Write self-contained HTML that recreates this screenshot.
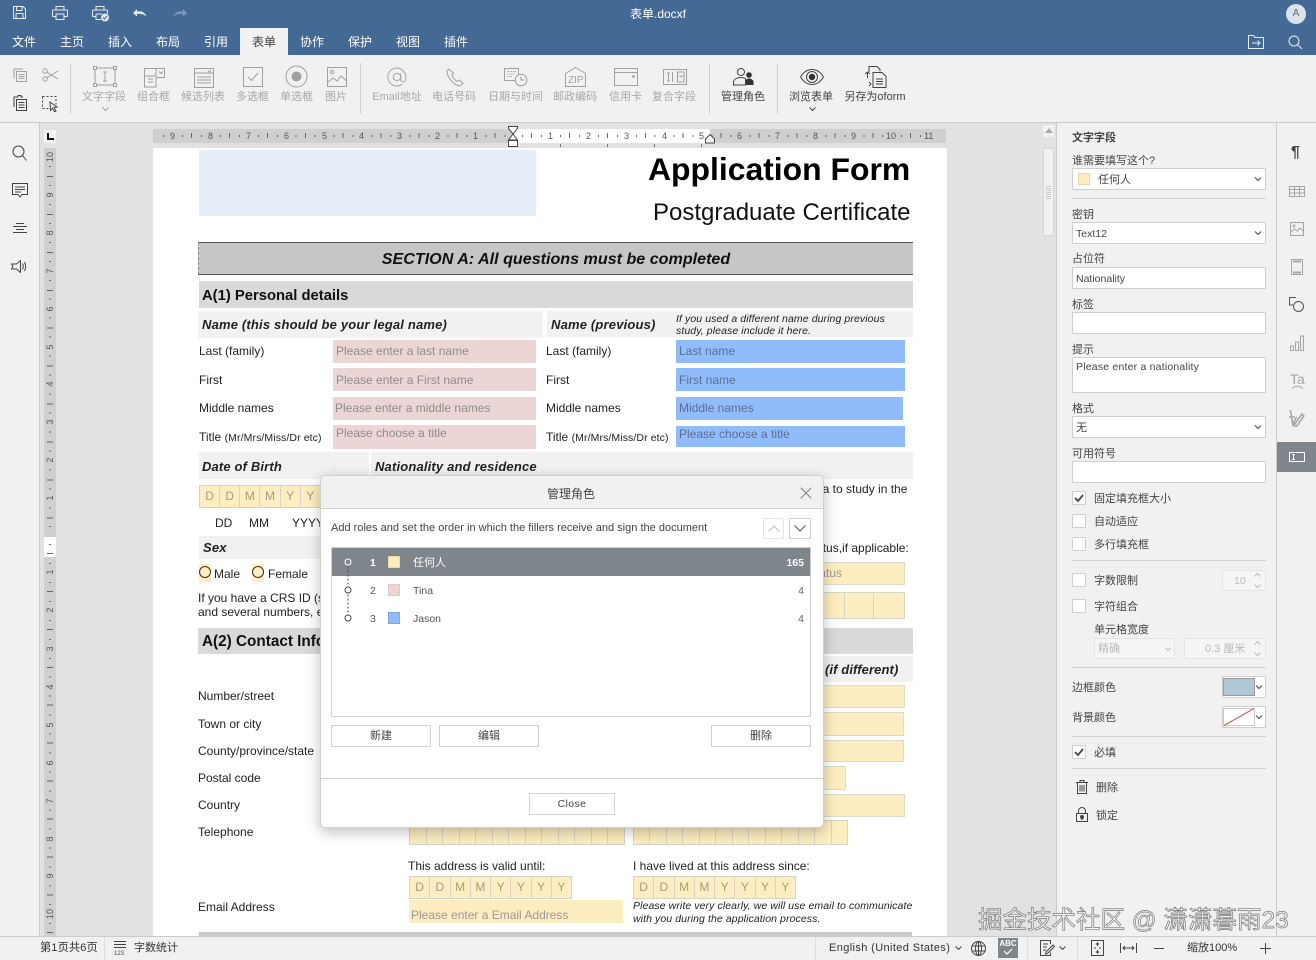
<!DOCTYPE html>
<html lang="zh"><head><meta charset="utf-8"><title>表单.docxf</title>
<style>
*{box-sizing:border-box}
html,body{margin:0;padding:0;width:1316px;height:960px;overflow:hidden;background:#e2e2e2}
body{position:relative;font-family:"Liberation Sans","Noto Sans CJK SC",sans-serif;font-size:11px;color:#444}
div,span,svg{position:absolute}
.t{white-space:nowrap;line-height:14px;height:14px}
.c span,.m span{position:static}
.m{color:#fff;font-size:12px;top:35px}
.lb{color:#a8a8a8;font-size:11px;top:90px;text-align:center}
.dk{color:#444}
.ic{fill:none;stroke:#a0a0a0;stroke-width:1}
.id{fill:none;stroke:#444;stroke-width:1}
.vd{background:#cfcfcf;width:1px}
.l{color:#222;font-size:12px}
.pk{background:#ecd5d5;color:#8d8d8d;font-size:12px;padding-left:3px;line-height:23px;white-space:nowrap}
.bl{background:#90bcfb;color:#5b6f94;font-size:12px;padding-left:3px;line-height:23px;white-space:nowrap}
.yl{background:#fdedc0;border:1px solid #d9dcc8;color:#999;font-size:12px;padding-left:2px;line-height:26px;white-space:nowrap}
.g1{background:#d9d9d9}.g2{background:#f1f1f1}
.h2{font-weight:bold;font-size:14.800px;color:#111}
.h3{font-weight:bold;font-style:italic;font-size:13px;letter-spacing:.18px;color:#222}
.it{font-style:italic;font-size:10.500px;color:#222;letter-spacing:.09px}
.comb{display:flex;background:#fdedc0;border:1px solid #d3d6c4;height:23px}
.comb b{position:static;display:block;flex:1;font-weight:normal;text-align:center;color:#a59b80;font-size:12px;line-height:21px;border-right:1px solid #d3d6c4}
.comb b:last-child{border-right:0}
.rn{color:#555;font-size:9px;line-height:10px;white-space:nowrap}
.pl{color:#444;font-size:11px}
.inp{background:#fff;border:1px solid #cfcfcf;border-radius:1px;color:#444;font-size:10.500px;line-height:22px;padding-left:3px;left:1072px;width:194px;white-space:nowrap}
.chk{left:1072px;width:14px;height:14px;background:#fff;border:1px solid #cfcfcf;border-radius:1px}
.hr{left:1072px;width:194px;height:1px;background:#d2d2d2}
.btn{background:#fff;border:1px solid #cfcfcf;border-radius:1px;text-align:center;color:#444;font-size:11px;line-height:21px}
.rv{left:44px;width:12px;text-align:center;transform:rotate(-90deg)}
</style></head><body>

<!-- header -->
<div style="left:0;top:0;width:1316px;height:55px;background:#446995"></div>
<svg style="left:12px;top:5px" width="15" height="15" viewBox="0 0 15 15" fill="none" stroke="#e8edf3"><path d="M1.500 1.500h9.500l2.500 2.500v9.500h-12z"/><path d="M4.500 1.500v4h5.500v-4M4 13.500v-5h7v5"/></svg>
<svg style="left:52px;top:6px" width="16" height="14" viewBox="0 0 16 14" fill="none" stroke="#e8edf3"><path d="M4 4V.5h8V4M4 10.500H1.500a1 1 0 0 1-1-1V5a1 1 0 0 1 1-1h13a1 1 0 0 1 1 1v4.500a1 1 0 0 1-1 1H12"/><path d="M4 8h8v5.500H4z"/></svg>
<svg style="left:92px;top:6px" width="18" height="16" viewBox="0 0 18 16" fill="none" stroke="#e8edf3"><path d="M4 4V.5h8V4M4 10.500H1.500a1 1 0 0 1-1-1V5a1 1 0 0 1 1-1h13a1 1 0 0 1 1 1v3"/><path d="M4 8h6M4 8v5.500h5"/><circle cx="13" cy="11.500" r="4" fill="#dfe6ef" stroke="none"/><path d="M11 11.500l1.500 1.500 2.500-3" stroke="#446995"/></svg>
<svg style="left:132px;top:8px" width="16" height="10" viewBox="0 0 16 10"><path d="M1 5l4-4v2.500c4-.8 8 .5 9.500 5-2.500-2.500-5.500-3-9.500-2.500V8.500z" fill="#e4eaf2"/></svg>
<svg style="left:172px;top:8px" width="16" height="10" viewBox="0 0 16 10"><path d="M15 5l-4-4v2.500C7 2.700 3 4 1.500 8.500 4 6 7 5.500 11 6V8.500z" fill="#7d99bb"/></svg>
<div class="t" style="left:630px;top:7px;color:#fff;font-size:12px">表单.docxf</div>
<div style="left:1286px;top:4px;width:20px;height:20px;border-radius:50%;background:#dde3ec;color:#666;font-size:10px;line-height:20px;text-align:center">A</div>
<svg style="left:1247px;top:35px" width="18" height="14" viewBox="0 0 18 14" fill="none" stroke="#e6ecf3"><path d="M1.500.5h5l1.500 2h8.500v11h-15z"/><path d="M5 8h8M10.500 5.500L13 8l-2.500 2.500"/></svg>
<svg style="left:1288px;top:35px" width="15" height="14" viewBox="0 0 15 14" fill="none" stroke="#e6ecf3"><circle cx="6" cy="6" r="5"/><path d="M9.500 9.500l4.500 4.500"/></svg>
<div style="left:240px;top:28px;width:48px;height:27px;background:#f1f1f1"></div>
<div class="t m" style="left:12px">文件</div><div class="t m" style="left:60px">主页</div><div class="t m" style="left:108px">插入</div><div class="t m" style="left:156px">布局</div><div class="t m" style="left:204px">引用</div><div class="t m" style="left:252px;color:#444">表单</div><div class="t m" style="left:300px">协作</div><div class="t m" style="left:348px">保护</div><div class="t m" style="left:396px">视图</div><div class="t m" style="left:444px">插件</div>

<!-- toolbar -->
<div style="left:0;top:55px;width:1316px;height:68px;background:#f1f1f1;border-bottom:1px solid #cbcbcb"></div>
<svg style="left:13px;top:68px" width="15" height="15" viewBox="0 0 15 15" class="ic"><path d="M1 10.500V1h9"/><path d="M3.500 3.500h10v10h-10zM5.500 6.500h6M5.500 8.500h6M5.500 10.500h6" fill="#f1f1f1"/></svg>
<svg style="left:42px;top:68px" width="17" height="14" viewBox="0 0 17 14" class="ic"><circle cx="3" cy="3" r="2.200"/><circle cx="3" cy="11" r="2.200"/><path d="M5 4.300L16 11M5 9.700L16 3"/></svg>
<svg style="left:13px;top:95px" width="15" height="16" viewBox="0 0 15 16" class="id"><path d="M1 12V2h4V.5h3V2h2"/><path d="M3.500 4.500h10v11h-10zM5.500 7.500h6M5.500 10h6M5.500 12.500h6" fill="#f1f1f1"/></svg>
<svg style="left:42px;top:96px" width="17" height="16" viewBox="0 0 17 16" class="id"><path d="M.5.500h13.500v8M.5.500v12h6" stroke-dasharray="2 2"/><path d="M8 6l7 5-3 .5 2 3.500-1.500.8-2-3.500-2 2z" fill="#f1f1f1"/></svg>
<div class="vd" style="left:70px;top:63px;height:51px"></div>
<svg style="left:93px;top:66px" width="24" height="21" viewBox="0 0 24 21" class="ic"><path d="M2 2h20v17H2z"/><path d="M.5.500h3v3h-3zM20.500.500h3v3h-3zM.5 17.500h3v3h-3zM20.500 17.500h3v3h-3z" fill="#f1f1f1"/><path d="M10 6h4M10 15h4M12 6v9"/></svg>
<div class="t lb" style="left:82px;width:44px">文字字段</div>
<svg style="left:102px;top:107px" width="7" height="5" viewBox="0 0 7 5" class="ic"><path d="M.5.500l3 3 3-3"/></svg>
<svg style="left:144px;top:68px" width="21" height="20" viewBox="0 0 21 20" class="ic"><path d="M.5.500h20v9h-8.500v9.500H.5zM.5 8h11.500V.5M4 11h5M4 14h5M15 3.500l2 2 2-2"/></svg>
<div class="t lb" style="left:137px;width:33px">组合框</div>
<svg style="left:194px;top:68px" width="20" height="20" viewBox="0 0 20 20" class="ic"><path d="M.5.500h19v19H.5zM.5 5h19M3 9h14M3 12h14M3 15h14M14 2.500l1.500 1.500L17 2.500"/></svg>
<div class="t lb" style="left:181px;width:44px">候选列表</div>
<svg style="left:243px;top:67px" width="20" height="20" viewBox="0 0 20 20" class="ic"><path d="M.5.500h19v19H.5zM5 10l3.500 3.500L15 6"/></svg>
<div class="t lb" style="left:236px;width:33px">多选框</div>
<svg style="left:285px;top:65px" width="23" height="23" viewBox="0 0 23 23" class="ic"><circle cx="11.500" cy="11.500" r="10.500"/><circle cx="11.500" cy="11.500" r="4.500" fill="#a0a0a0"/></svg>
<div class="t lb" style="left:280px;width:33px">单选框</div>
<svg style="left:327px;top:67px" width="20" height="20" viewBox="0 0 20 20" class="ic"><path d="M.5.500h19v19H.5z"/><circle cx="5" cy="5" r="1.700"/><path d="M1 15l5-4 4 3 4-5 5.500 5"/></svg>
<div class="t lb" style="left:325px;width:22px">图片</div>
<div class="vd" style="left:360px;top:63px;height:51px"></div>
<svg style="left:386px;top:66px" width="22" height="22" viewBox="0 0 24 24" class="ic"><circle cx="12" cy="12" r="4"/><path d="M16 8v6.500a2.800 2.800 0 0 0 5.600 0V12a9.800 9.800 0 1 0-4 7.900"/></svg>
<div class="t lb" style="left:372px;width:50px">Email地址</div>
<svg style="left:446px;top:68px" width="19" height="19" viewBox="0 0 19 19" class="ic"><path d="M3 1L1 3c0 7 7 14 13 15l3-2.500-3.500-3.500-2.500 1.500C9 12 7 10 6 7.500L7.500 5z"/></svg>
<div class="t lb" style="left:432px;width:44px">电话号码</div>
<svg style="left:504px;top:66px" width="24" height="21" viewBox="0 0 24 21" class="ic"><path d="M.5 2.500h14v12H.5z"/><path d="M3 5.500h9M3 8h7M3 10.500h5" stroke-dasharray="1 1"/><circle cx="17" cy="14" r="5.800" fill="#f1f1f1"/><path d="M17 10.500V14h3"/></svg>
<div class="t lb" style="left:488px;width:54px">日期与时间</div>
<svg style="left:565px;top:67px" width="21" height="20" viewBox="0 0 21 20" class="ic"><path d="M.5 19.500V6.500l10-6 10 6v13z"/></svg>
<div class="t" style="left:568px;top:74px;color:#a0a0a0;font-size:10px;width:15px">ZIP</div>
<div class="t lb" style="left:553px;width:44px">邮政编码</div>
<svg style="left:614px;top:68px" width="24" height="18" viewBox="0 0 24 18" class="ic"><path d="M.5.500h23v17H.5zM.5 4.500h23"/><path d="M18 8.500h3" stroke-width="2"/></svg>
<div class="t lb" style="left:609px;width:33px">信用卡</div>
<svg style="left:663px;top:69px" width="24" height="16" viewBox="0 0 24 16" class="ic"><path d="M.5.500h23v15H.5zM9.500 3v10M14.500 3v10h6.500V3zM4 4h3M4 12h3M5.500 4v8M16.500 6.500l1.500 1.500 1.500-1.500"/></svg>
<div class="t lb" style="left:652px;width:44px">复合字段</div>
<div class="vd" style="left:709px;top:63px;height:51px"></div>
<svg style="left:733px;top:68px" width="22" height="18" viewBox="0 0 22 18" class="id"><circle cx="8" cy="4" r="3.500"/><path d="M.5 17v-2.500c0-3 3-5 7.500-5 2 0 3.500.4 4.500 1V17z"/><circle cx="16" cy="7" r="2.800" fill="#333" stroke="none"/><path d="M12.500 17v-4.500c1-1.500 2.200-2 3.500-2s3 .5 4.500 2.500v4z" fill="#333" stroke="none"/></svg>
<div class="t lb dk" style="left:721px;width:44px;color:#444">管理角色</div>
<div class="vd" style="left:777px;top:63px;height:51px"></div>
<svg style="left:800px;top:68px" width="24" height="18" viewBox="0 0 24 18" class="id"><path d="M.5 9C3.500 4 7.500 1.500 12 1.500S20.500 4 23.500 9c-3 5-7 7.500-11.500 7.500S3.500 14 .5 9z"/><circle cx="12" cy="9" r="5.500"/><circle cx="12" cy="9" r="3.200" fill="#333" stroke="none"/></svg>
<div class="t lb" style="left:789px;width:44px;color:#444">浏览表单</div>
<svg style="left:809px;top:107px" width="7" height="5" viewBox="0 0 7 5" class="id"><path d="M.5.500l3 3 3-3"/></svg>
<svg style="left:864px;top:66px" width="23" height="22" viewBox="0 0 23 22" class="id"><path d="M5 6V.5h8l3 3v2M1 8l2.500-2L6 8M3.500 6v6M5 16l2 2-2 2" fill="none"/><path d="M9 6.500h9l4 4v11H9zM12 13h7M12 15.500h7M12 18h7"/></svg>
<div class="t lb" style="left:844px;width:62px;color:#444">另存为oform</div>

<!-- left sidebar -->
<div style="left:0;top:123px;width:40px;height:813px;background:#f1f1f1;border-right:1px solid #cbcbcb"></div>
<svg style="left:12px;top:145px" width="15" height="16" viewBox="0 0 15 16" class="id"><circle cx="6.500" cy="6.500" r="5.500"/><path d="M10.500 10.500l4 5"/></svg>
<svg style="left:12px;top:183px" width="16" height="15" viewBox="0 0 16 15" class="id"><path d="M.5.500h15v11H10l-2 2.500-2-2.500H.5zM3 4h10M3 6.500h10M3 9h6"/></svg>
<svg style="left:13px;top:223px" width="14" height="12" viewBox="0 0 14 12" class="id"><path d="M3 .5h8M0 3.500h14M3 6.500h8M0 9.500h14"/></svg>
<svg style="left:11px;top:260px" width="17" height="13" viewBox="0 0 17 13" class="id"><path d="M.5 4h5l4-3.500v12L5.500 9H.5l1.500-2.500zM11.500 3.500c1 2 1 4 0 6M13.500 2c1.500 3 1.500 6 0 9"/></svg>

<!-- horizontal ruler -->
<div style="left:44px;top:130px;width:12px;height:13px;background:#f4f4f4"></div>
<svg style="left:47px;top:133px" width="7" height="7" viewBox="0 0 7 7"><path d="M0 0h2v5h5v2H0z" fill="#111"/></svg>
<div style="left:153px;top:129px;width:793px;height:14px;background:#cfcfcf"></div>
<div style="left:513px;top:129px;width:197px;height:14px;background:#fff"></div>
<div style="left:163px;top:135px;width:350px;height:2px;background:repeating-linear-gradient(90deg,#666 0,#666 1px,transparent 1px,transparent 18.960px)"></div>
<div style="left:191px;top:133px;width:322px;height:5px;background:repeating-linear-gradient(90deg,#666 0,#666 1px,transparent 1px,transparent 37.920px)"></div>
<div style="left:522px;top:135px;width:415px;height:2px;background:repeating-linear-gradient(90deg,#666 0,#666 1px,transparent 1px,transparent 18.960px)"></div>
<div style="left:531px;top:133px;width:405px;height:5px;background:repeating-linear-gradient(90deg,#666 0,#666 1px,transparent 1px,transparent 37.920px)"></div>
<div style="left:560px;top:144px;width:1px;height:3px;background:#777"></div><div style="left:607px;top:144px;width:1px;height:3px;background:#777"></div><div style="left:654px;top:144px;width:1px;height:3px;background:#777"></div><div style="left:701px;top:144px;width:1px;height:3px;background:#777"></div>
<div class="rn" style="left:170px;top:131px">9</div><div class="rn" style="left:208px;top:131px">8</div><div class="rn" style="left:246px;top:131px">7</div><div class="rn" style="left:284px;top:131px">6</div><div class="rn" style="left:322px;top:131px">5</div><div class="rn" style="left:359px;top:131px">4</div><div class="rn" style="left:397px;top:131px">3</div><div class="rn" style="left:435px;top:131px">2</div><div class="rn" style="left:473px;top:131px">1</div>
<div class="rn" style="left:548px;top:131px">1</div><div class="rn" style="left:586px;top:131px">2</div><div class="rn" style="left:624px;top:131px">3</div><div class="rn" style="left:662px;top:131px">4</div><div class="rn" style="left:699px;top:131px">5</div><div class="rn" style="left:737px;top:131px">6</div><div class="rn" style="left:775px;top:131px">7</div><div class="rn" style="left:813px;top:131px">8</div><div class="rn" style="left:851px;top:131px">9</div><div class="rn" style="left:886px;top:131px">10</div><div class="rn" style="left:924px;top:131px">11</div>
<svg style="left:507px;top:126px" width="12" height="22" viewBox="0 0 12 22" fill="#fff" stroke="#444"><path d="M1.500.5h9v2L6 8 1.500 2.500zM6 8l4.500 6H1.500zM1.500 14.500h9v6h-9z"/></svg>
<svg style="left:704px;top:134px" width="12" height="10" viewBox="0 0 12 10" fill="#fff" stroke="#444"><path d="M6 .5L10.500 5v4h-9V5z"/></svg>

<!-- vertical ruler -->
<div style="left:44px;top:148px;width:12px;height:788px;background:#cfcfcf"></div>
<div style="left:44px;top:537px;width:12px;height:20px;background:#fff"></div>
<div style="left:49px;top:166px;width:2px;height:371px;background:repeating-linear-gradient(180deg,#666 0,#666 1px,transparent 1px,transparent 18.960px)"></div>
<div style="left:47px;top:176px;width:6px;height:361px;background:repeating-linear-gradient(180deg,#666 0,#666 1px,transparent 1px,transparent 37.920px)"></div>
<div style="left:49px;top:544px;width:2px;height:392px;background:repeating-linear-gradient(180deg,#666 0,#666 1px,transparent 1px,transparent 18.960px)"></div>
<div style="left:47px;top:553px;width:6px;height:383px;background:repeating-linear-gradient(180deg,#666 0,#666 1px,transparent 1px,transparent 37.920px)"></div>
<div class="rn rv" style="top:152px">10</div><div class="rn rv" style="top:190px">9</div><div class="rn rv" style="top:228px">8</div><div class="rn rv" style="top:266px">7</div><div class="rn rv" style="top:304px">6</div><div class="rn rv" style="top:342px">5</div><div class="rn rv" style="top:379px">4</div><div class="rn rv" style="top:417px">3</div><div class="rn rv" style="top:455px">2</div><div class="rn rv" style="top:493px">1</div>
<div class="rn rv" style="top:567px">1</div><div class="rn rv" style="top:605px">2</div><div class="rn rv" style="top:644px">3</div><div class="rn rv" style="top:682px">4</div><div class="rn rv" style="top:720px">5</div><div class="rn rv" style="top:758px">6</div><div class="rn rv" style="top:796px">7</div><div class="rn rv" style="top:834px">8</div><div class="rn rv" style="top:871px">9</div><div class="rn rv" style="top:909px">10</div>

<!-- page -->
<div style="left:153px;top:148px;width:794px;height:788px;background:#fff"></div>
<div style="left:199px;top:150px;width:337px;height:66px;background:#e6eefa"></div>
<div class="t" style="left:648px;top:150px;height:38px;line-height:38px;font-size:31.900px;font-weight:bold;color:#000">Application Form</div>
<div class="t" style="left:653px;top:198px;height:30px;line-height:30px;font-size:24px;color:#111">Postgraduate Certificate</div>
<div style="left:198px;top:242px;width:715px;height:33px;background:#c6c6c6;border-top:1px solid #555;border-bottom:1px solid #555;border-left:1px dashed #888;text-align:center;line-height:32px;font-weight:bold;font-style:italic;font-size:16.100px;color:#111">SECTION A: All questions must be completed</div>
<div class="g1" style="left:199px;top:281px;width:714px;height:27px"></div>
<div class="t h2" style="left:202px;top:289px">A(1) Personal details</div>
<div class="g2" style="left:198px;top:311px;width:345px;height:27px"></div>
<div class="t h3" style="left:202px;top:318px">Name (this should be your legal name)</div>
<div class="g2" style="left:547px;top:311px;width:366px;height:26px"></div>
<div class="t h3" style="left:551px;top:318px">Name (previous)</div>
<div class="t it" style="left:676px;top:312px">If you used a different name during previous</div>
<div class="t it" style="left:676px;top:324px">study, please include it here.</div>
<div class="t l" style="left:199px;top:344px">Last (family)</div><div class="t l" style="left:199px;top:373px">First</div><div class="t l" style="left:199px;top:401px">Middle names</div><div class="t l" style="left:199px;top:430px">Title <span style="font-size:10.500px;position:static;letter-spacing:.1px">(Mr/Mrs/Miss/Dr etc)</span></div>
<div class="pk" style="left:333px;top:340px;width:203px;height:23px">Please enter a last name</div>
<div class="pk" style="left:333px;top:368px;width:203px;height:23px;line-height:25px">Please enter a First name</div>
<div class="pk" style="left:333px;top:397px;width:203px;height:23px;padding-left:2px">Please enter a middle names</div>
<div class="pk" style="left:333px;top:425px;width:203px;height:24px;line-height:16px">Please choose a title</div>
<div class="t l" style="left:546px;top:344px">Last (family)</div><div class="t l" style="left:546px;top:373px">First</div><div class="t l" style="left:546px;top:401px">Middle names</div><div class="t l" style="left:546px;top:430px">Title <span style="font-size:10.500px;position:static;letter-spacing:.1px">(Mr/Mrs/Miss/Dr etc)</span></div>
<div class="bl" style="left:676px;top:340px;width:229px;height:23px">Last name</div>
<div class="bl" style="left:676px;top:368px;width:229px;height:23px;line-height:25px">First name</div>
<div class="bl" style="left:676px;top:397px;width:227px;height:23px">Middle names</div>
<div class="bl" style="left:676px;top:426px;width:229px;height:21px;line-height:17px">Please choose a title</div>
<div class="g2" style="left:199px;top:452px;width:170px;height:27px"></div>
<div class="t h3" style="left:202px;top:460px;letter-spacing:.15px">Date of Birth</div>
<div class="g2" style="left:371px;top:452px;width:542px;height:27px"></div>
<div class="t h3" style="left:375px;top:460px;letter-spacing:.17px">Nationality and residence</div>
<div class="comb" style="left:199px;top:485px;width:142px"><b>D</b><b>D</b><b>M</b><b>M</b><b>Y</b><b>Y</b><b>Y</b></div>
<div class="t l" style="left:215px;top:516px">DD</div><div class="t l" style="left:249px;top:516px">MM</div><div class="t l" style="left:292px;top:516px">YYYY</div>
<div class="g2" style="left:199px;top:536px;width:130px;height:23px"></div>
<div class="t h3" style="left:203px;top:541px">Sex</div>
<div style="left:199px;top:564px;width:12px;height:18px;background:#fdedc0"></div>
<div style="left:199px;top:566px;width:12px;height:12px;border:1.500px solid #333;border-radius:50%"></div>
<div class="t l" style="left:214px;top:567px">Male</div>
<div style="left:252px;top:564px;width:12px;height:18px;background:#fdedc0"></div>
<div style="left:252px;top:566px;width:12px;height:12px;border:1.500px solid #333;border-radius:50%"></div>
<div class="t l" style="left:268px;top:567px">Female</div>
<div class="t l" style="left:198px;top:591px">If you have a CRS ID (s</div>
<div class="t l" style="left:198px;top:605px">and several numbers, e</div>
<div class="g1" style="left:198px;top:628px;width:715px;height:26px"></div>
<div class="t h2" style="left:202px;top:635px;font-size:15.300px">A(2) Contact Information</div>
<div class="g2" style="left:800px;top:656px;width:113px;height:26px"></div>
<div class="t h3" style="left:825px;top:663px;letter-spacing:.1px">(if different)</div>
<div class="t l" style="left:198px;top:689px">Number/street</div><div class="t l" style="left:198px;top:717px">Town or city</div><div class="t l" style="left:198px;top:744px">County/province/state</div><div class="t l" style="left:198px;top:771px">Postal code</div><div class="t l" style="left:198px;top:798px">Country</div><div class="t l" style="left:198px;top:825px">Telephone</div>
<div class="t l" style="left:808px;top:482px">visa to study in the</div>
<div class="t l" style="left:790px;top:541px">de status,if applicable:</div>
<div class="yl" style="left:760px;top:562px;width:145px;height:23px;line-height:21px;padding-left:49px">status</div>
<div style="left:760px;top:592px;width:145px;height:27px;background:#fdedc0;border:1px solid #d3d6c4"></div>
<div style="left:844px;top:592px;width:1px;height:27px;background:#d3d6c4"></div>
<div style="left:873px;top:592px;width:1px;height:27px;background:#d3d6c4"></div>
<div class="yl" style="left:760px;top:685px;width:145px;height:23px"></div>
<div class="yl" style="left:760px;top:712px;width:144px;height:24px"></div>
<div class="yl" style="left:760px;top:740px;width:144px;height:22px"></div>
<div class="yl" style="left:760px;top:766px;width:86px;height:24px"></div>
<div class="yl" style="left:760px;top:794px;width:145px;height:23px"></div>
<div class="comb" style="left:409px;top:820px;width:216px;height:25px"><b></b><b></b><b></b><b></b><b></b><b></b><b></b><b></b><b></b><b></b><b></b><b></b><b></b></div>
<div class="comb" style="left:633px;top:820px;width:215px;height:25px"><b></b><b></b><b></b><b></b><b></b><b></b><b></b><b></b><b></b><b></b><b></b><b></b><b></b></div>
<div class="t l" style="left:408px;top:859px">This address is valid until:</div>
<div class="t l" style="left:633px;top:859px">I have lived at this address since:</div>
<div class="comb" style="left:409px;top:876px;width:163px"><b>D</b><b>D</b><b>M</b><b>M</b><b>Y</b><b>Y</b><b>Y</b><b>Y</b></div>
<div class="comb" style="left:633px;top:876px;width:163px"><b>D</b><b>D</b><b>M</b><b>M</b><b>Y</b><b>Y</b><b>Y</b><b>Y</b></div>
<div class="t l" style="left:198px;top:900px">Email Address</div>
<div class="yl" style="left:409px;top:900px;width:214px;height:23px;line-height:30px;border:0;padding-left:2px;overflow:hidden">Please enter a Email Address</div>
<div class="t it" style="left:633px;top:899px">Please write very clearly, we will use email to communicate</div>
<div class="t it" style="left:633px;top:912px">with you during the application process.</div>
<div style="left:199px;top:932px;width:713px;height:4px;background:#c9c9c9"></div>

<!-- dialog -->
<div style="left:320px;top:475px;width:504px;height:353px;background:#fff;border:1px solid #cfcfcf;border-radius:5px;box-shadow:0 4px 14px rgba(0,0,0,.25);overflow:hidden"></div>
<div style="left:321px;top:476px;width:502px;height:33px;background:#f1f1f1;border-bottom:1px solid #cfcfcf;border-radius:5px 5px 0 0"></div>
<div class="t" style="left:547px;top:487px;font-size:12px;color:#444">管理角色</div>
<svg style="left:800px;top:487px" width="12" height="12" viewBox="0 0 12 12" stroke="#777" fill="none"><path d="M.7.700l10.600 10.600M11.300.700L.7 11.300"/></svg>
<div class="t" style="left:331px;top:521px;font-size:11px;color:#444;letter-spacing:.01px">Add roles and set the order in which the fillers receive and sign the document</div>
<div style="left:763px;top:518px;width:21px;height:21px;border:1px solid #e6e6e6;border-radius:1px;background:#fff"></div>
<svg style="left:768px;top:525px" width="12" height="7" viewBox="0 0 12 7" fill="none" stroke="#bdbdbd"><path d="M.5 6.500l5.500-5.500 5.500 5.500"/></svg>
<div style="left:789px;top:518px;width:22px;height:21px;border:1px solid #cfcfcf;border-radius:1px;background:#fff"></div>
<svg style="left:794px;top:525px" width="12" height="7" viewBox="0 0 12 7" fill="none" stroke="#555"><path d="M.5.500l5.500 5.500 5.500-5.500"/></svg>
<div style="left:331px;top:547px;width:480px;height:170px;border:1px solid #cfcfcf;border-radius:1px"></div>
<div style="left:332px;top:548px;width:478px;height:28px;background:#7e858b"></div>
<svg style="left:343px;top:557px" width="10" height="66" viewBox="0 0 10 66" fill="none"><path d="M5 9.500v47" stroke="#444" stroke-dasharray="2 2"/><circle cx="5" cy="5" r="3" stroke="#fff" fill="#7e858b"/><circle cx="5" cy="33" r="3" stroke="#444" fill="#fff"/><circle cx="5" cy="61" r="3" stroke="#444" fill="#fff"/></svg>
<div class="t" style="left:370px;top:556px;font-size:10.500px;color:#fff;font-weight:bold">1</div>
<div style="left:388px;top:556px;width:12px;height:12px;background:#fdedc0;border:1px solid #e8d9a8"></div>
<div class="t" style="left:413px;top:556px;font-size:11px;color:#fff">任何人</div>
<div class="t" style="right:512px;top:556px;font-size:10.500px;color:#fff;font-weight:bold">165</div>
<div class="t" style="left:370px;top:584px;font-size:10.500px;color:#555">2</div>
<div style="left:388px;top:584px;width:12px;height:12px;background:#ecd5d5;border:1px solid #dcc8c8"></div>
<div class="t" style="left:413px;top:584px;font-size:10.500px;color:#555">Tina</div>
<div class="t" style="right:512px;top:584px;font-size:10.500px;color:#666">4</div>
<div class="t" style="left:370px;top:612px;font-size:10.500px;color:#555">3</div>
<div style="left:388px;top:612px;width:12px;height:12px;background:#90bcfb;border:1px solid #7ea5dc"></div>
<div class="t" style="left:413px;top:612px;font-size:10.500px;color:#555">Jason</div>
<div class="t" style="right:512px;top:612px;font-size:10.500px;color:#666">4</div>
<div class="btn" style="left:331px;top:725px;width:100px;height:22px">新建</div>
<div class="btn" style="left:439px;top:725px;width:100px;height:22px">编辑</div>
<div class="btn" style="left:711px;top:725px;width:100px;height:22px">删除</div>
<div style="left:321px;top:778px;width:502px;height:1px;background:#cfcfcf"></div>
<div class="btn" style="left:529px;top:793px;width:86px;height:22px;font-size:10.500px;letter-spacing:.4px">Close</div>

<!-- scrollbar -->
<div style="left:1040px;top:123px;width:17px;height:813px;background:#e2e2e2;border-right:1px solid #cbcbcb"></div>
<div style="left:1043px;top:125px;width:11px;height:12px;background:#f1f1f1"></div>
<svg style="left:1045px;top:128px" width="8" height="5" viewBox="0 0 8 5"><path d="M4 0l4 5H0z" fill="#aaa"/></svg>
<div style="left:1043px;top:148px;width:11px;height:88px;background:#f1f1f1;border:1px solid #d6d6d6;border-radius:1px"></div>
<div style="left:1046px;top:186px;width:5px;height:13px;background:repeating-linear-gradient(180deg,#c9c9c9 0,#c9c9c9 1px,transparent 1px,transparent 2px)"></div>

<!-- right panel -->
<div style="left:1057px;top:123px;width:220px;height:813px;background:#f1f1f1;border-right:1px solid #cbcbcb"></div>
<div class="t pl" style="left:1072px;top:131px;font-weight:bold;color:#444">文字字段</div>
<div class="t pl" style="left:1072px;top:154px">谁需要填写这个?</div>
<div class="inp" style="top:168px;height:22px;padding-left:25px;font-size:11px">任何人</div>
<div style="left:1078px;top:173px;width:12px;height:12px;background:#fdedc0;border:1px solid #e4d9a8"></div>
<div class="hr" style="top:198px"></div>
<div class="t pl" style="left:1072px;top:208px">密钥</div>
<div class="inp" style="top:222px;height:22px">Text12</div>
<div class="t pl" style="left:1072px;top:252px">占位符</div>
<div class="inp" style="top:267px;height:22px">Nationality</div>
<div class="t pl" style="left:1072px;top:298px">标签</div>
<div class="inp" style="top:312px;height:22px"></div>
<div class="t pl" style="left:1072px;top:343px">提示</div>
<div class="inp" style="top:357px;height:36px;line-height:18px;letter-spacing:.2px">Please enter a nationality</div>
<div class="t pl" style="left:1072px;top:402px">格式</div>
<div class="inp" style="top:416px;height:22px;font-size:11px">无</div>
<div class="t pl" style="left:1072px;top:447px">可用符号</div>
<div class="inp" style="top:461px;height:22px"></div>
<svg style="left:1254px;top:177px" width="8" height="5" viewBox="0 0 8 5" class="id"><path d="M1 .5l3 3 3-3"/></svg>
<svg style="left:1254px;top:231px" width="8" height="5" viewBox="0 0 8 5" class="id"><path d="M1 .5l3 3 3-3"/></svg>
<svg style="left:1254px;top:425px" width="8" height="5" viewBox="0 0 8 5" class="id"><path d="M1 .5l3 3 3-3"/></svg>
<div class="chk" style="top:491px"></div>
<svg style="left:1074px;top:493px" width="10" height="10" viewBox="0 0 10 10" fill="none" stroke="#444" stroke-width="1.800"><path d="M1 5l3 3 5-6"/></svg>
<div class="t pl" style="left:1094px;top:492px">固定填充框大小</div>
<div class="chk" style="top:514px"></div><div class="t pl" style="left:1094px;top:515px">自动适应</div>
<div class="chk" style="top:537px"></div><div class="t pl" style="left:1094px;top:538px">多行填充框</div>
<div class="hr" style="top:560px"></div>
<div class="chk" style="top:573px"></div><div class="t pl" style="left:1094px;top:574px">字数限制</div>
<div style="left:1222px;top:570px;width:44px;height:21px;background:#f5f5f5;border:1px solid #e4e4e4"></div>
<div class="t" style="left:1234px;top:574px;color:#bbb;font-size:10.500px">10</div>
<svg style="left:1253px;top:572px" width="9" height="17" viewBox="0 0 9 17" fill="none" stroke="#bbb"><path d="M1.500 4.500l3-3 3 3M1.500 12.500l3 3 3-3"/></svg>
<div class="chk" style="top:599px"></div><div class="t pl" style="left:1094px;top:600px">字符组合</div>
<div class="t pl" style="left:1094px;top:623px">单元格宽度</div>
<div style="left:1094px;top:638px;width:81px;height:21px;background:#f5f5f5;border:1px solid #e4e4e4;color:#bbb;font-size:11px;line-height:21px;padding-left:3px">精确</div>
<svg style="left:1164px;top:647px" width="8" height="5" viewBox="0 0 8 5" fill="none" stroke="#bbb"><path d="M1 .5l3 3 3-3"/></svg>
<div style="left:1184px;top:638px;width:82px;height:21px;background:#f5f5f5;border:1px solid #e4e4e4;color:#bbb;font-size:11px;line-height:21px;padding-left:20px;white-space:nowrap">0.3 厘米</div>
<svg style="left:1253px;top:640px" width="9" height="17" viewBox="0 0 9 17" fill="none" stroke="#bbb"><path d="M1.500 4.500l3-3 3 3M1.500 12.500l3 3 3-3"/></svg>
<div class="hr" style="top:667px"></div>
<div class="t pl" style="left:1072px;top:681px">边框颜色</div>
<div style="left:1222px;top:676px;width:44px;height:22px;background:#fff;border:1px solid #cfcfcf"></div>
<div style="left:1223px;top:678px;width:32px;height:18px;background:#b0c8d6;border:1px solid #999"></div>
<svg style="left:1255px;top:685px" width="8" height="5" viewBox="0 0 8 5" class="id"><path d="M1 .5l3 3 3-3"/></svg>
<div class="t pl" style="left:1072px;top:711px">背景颜色</div>
<div style="left:1222px;top:706px;width:44px;height:22px;background:#fff;border:1px solid #cfcfcf"></div>
<svg style="left:1223px;top:708px" width="32" height="18" viewBox="0 0 32 18"><rect x=".5" y=".5" width="31" height="17" fill="#fff" stroke="#ccc"/><path d="M1 17.500L31 .5" stroke="#e0303a" stroke-width="1"/></svg>
<svg style="left:1255px;top:715px" width="8" height="5" viewBox="0 0 8 5" class="id"><path d="M1 .5l3 3 3-3"/></svg>
<div class="hr" style="top:736px"></div>
<div class="chk" style="top:745px"></div>
<svg style="left:1074px;top:747px" width="10" height="10" viewBox="0 0 10 10" fill="none" stroke="#444" stroke-width="1.800"><path d="M1 5l3 3 5-6"/></svg>
<div class="t pl" style="left:1094px;top:746px">必填</div>
<div class="hr" style="top:768px"></div>
<svg style="left:1076px;top:780px" width="12" height="14" viewBox="0 0 12 14" class="id"><path d="M0 2.500h12M4 2.500V.5h4v2M1.500 2.500v11h9v-11M4 5v6.500M6 5v6.500M8 5v6.500"/></svg>
<div class="t pl" style="left:1096px;top:781px">删除</div>
<svg style="left:1076px;top:807px" width="12" height="15" viewBox="0 0 12 15" class="id"><path d="M.5 6.500h11v8H.5zM2.500 6.500V4a3.500 3.500 0 0 1 7 0v2.500"/><circle cx="6" cy="10" r="1.500" fill="#444"/><path d="M6 10v3" stroke-width="1.500"/></svg>
<div class="t pl" style="left:1096px;top:809px">锁定</div>

<!-- right sidebar -->
<div style="left:1277px;top:123px;width:39px;height:813px;background:#f1f1f1"></div>
<div class="t" style="left:1291px;top:144px;height:18px;line-height:18px;font-size:16px;font-weight:bold;color:#444">¶</div>
<svg style="left:1289px;top:186px" width="16" height="11" viewBox="0 0 16 11" fill="none" stroke="#a5a5a5"><path d="M.5.500h15v10H.5zM.5 3.500h15M.5 7h15M5.500.5v10M10.500.5v10"/></svg>
<svg style="left:1290px;top:222px" width="14" height="14" viewBox="0 0 14 14" fill="none" stroke="#a5a5a5"><path d="M.5.500h13v13H.5z"/><circle cx="4" cy="4" r="1"/><path d="M1 10l3.500-3 3 2 2.500-3 3.500 3.500"/></svg>
<svg style="left:1291px;top:259px" width="12" height="16" viewBox="0 0 12 16" fill="none" stroke="#a5a5a5"><path d="M.5.500h11v15H.5z"/><path d="M2 2.500h8M2 13.500h8" stroke-width="2"/></svg>
<svg style="left:1289px;top:297px" width="16" height="16" viewBox="0 0 16 16" fill="none" stroke="#555"><path d="M7 .5H.5V8H4"/><circle cx="9.500" cy="9.500" r="5"/></svg>
<svg style="left:1290px;top:335px" width="15" height="16" viewBox="0 0 15 16" fill="none" stroke="#a5a5a5"><path d="M.5 11h3v4.500h-3zM5.500 7h3v8.500h-3zM10.500 1h3v14.500h-3z"/></svg>
<div class="t" style="left:1290px;top:372px;font-size:14px;color:#a5a5a5">Ta</div>
<svg style="left:1291px;top:385px" width="13" height="4" viewBox="0 0 13 4" fill="none" stroke="#a5a5a5"><path d="M1 3.500c3-3 8-3 11 0"/></svg>
<svg style="left:1288px;top:409px" width="18" height="18" viewBox="0 0 18 18" fill="none" stroke="#a5a5a5" stroke-width="1.500"><path d="M2 1c2 3 1 9 3 15 1-4 2-6 4-8M6 16l8-11 2 2-8 11zM1 8h6"/></svg>
<div style="left:1277px;top:442px;width:39px;height:30px;background:#7e858b"></div>
<svg style="left:1289px;top:452px" width="16" height="10" viewBox="0 0 16 10" fill="none" stroke="#fff"><path d="M.5.500h15v9H.5zM3 2.500h3M3 7.500h3M4.500 2.500v5"/></svg>

<!-- status bar -->
<div style="left:0;top:936px;width:1316px;height:24px;background:#f1f1f1;border-top:1px solid #cbcbcb"></div>
<div class="t" style="left:40px;top:941px;font-size:11.300px;color:#333">第1页共6页</div>
<div class="vd" style="left:104px;top:937px;height:23px;background:#dcdcdc"></div>
<svg style="left:114px;top:941px" width="13" height="15" viewBox="0 0 13 15" class="id"><path d="M0 .5h12M0 3.500h12M0 6.500h12"/></svg>
<div class="t" style="left:114px;top:950px;font-size:6px;height:8px;line-height:8px;color:#444">123</div>
<div class="t" style="left:134px;top:941px;font-size:11px;color:#333">字数统计</div>
<div class="vd" style="left:815px;top:937px;height:23px;background:#dcdcdc"></div>
<div class="t" style="left:829px;top:941px;font-size:11px;letter-spacing:.38px;color:#333">English (United States)</div>
<svg style="left:955px;top:946px" width="7" height="4" viewBox="0 0 7 4" class="id"><path d="M.5.500l3 3 3-3"/></svg>
<svg style="left:971px;top:941px" width="15" height="15" viewBox="0 0 15 15" class="id"><circle cx="7.500" cy="7.500" r="7"/><ellipse cx="7.500" cy="7.500" rx="3" ry="7"/><path d="M.5 5h14M.5 10h14M7.500.5v14"/></svg>
<div style="left:998px;top:938px;width:20px;height:20px;background:#7e858b;color:#fff;font-size:8px;font-weight:bold;line-height:11px;text-align:center">ABC</div>
<svg style="left:1003px;top:948px" width="10" height="8" viewBox="0 0 10 8" fill="none" stroke="#fff" stroke-width="1.200"><path d="M1 3l3 3 5-5"/></svg>
<div class="vd" style="left:1027px;top:937px;height:23px;background:#dcdcdc"></div>
<svg style="left:1040px;top:940px" width="15" height="16" viewBox="0 0 15 16" class="id"><path d="M10.500 4V.5h-10v15h10v-3M3 4h5M3 7h4M3 10h3M6 12l7-7 1.500 1.500-7 7-2 .5z"/></svg>
<svg style="left:1059px;top:946px" width="7" height="4" viewBox="0 0 7 4" class="id"><path d="M.5.500l3 3 3-3"/></svg>
<div class="vd" style="left:1077px;top:937px;height:23px;background:#dcdcdc"></div>
<svg style="left:1091px;top:940px" width="13" height="16" viewBox="0 0 13 16" class="id"><path d="M.5.500h12v15H.5zM6.500 3v3M5 4.500l1.500-1.500L8 4.500M6.500 13v-3M5 11.500L6.500 13 8 11.500M3 8h2M10 8H8"/></svg>
<svg style="left:1120px;top:943px" width="17" height="10" viewBox="0 0 17 10" class="id"><path d="M.5 0v10M16.500 0v10M3 5h11M5 3L3 5l2 2M12 3l2 2-2 2"/></svg>
<div style="left:1154px;top:948px;width:10px;height:1px;background:#444"></div>
<div class="t" style="left:1187px;top:941px;font-size:11px;color:#333">缩放100%</div>
<div style="left:1260px;top:948px;width:11px;height:1px;background:#444"></div>
<div style="left:1265px;top:943px;width:1px;height:11px;background:#444"></div>

<!-- watermark -->
<div class="t" style="left:978px;top:906px;height:30px;line-height:30px;font-size:24.500px;color:#f6f6f6;-webkit-text-stroke:.7px #777">掘金技术社区 @ 潇潇暮雨23</div>
</body></html>
